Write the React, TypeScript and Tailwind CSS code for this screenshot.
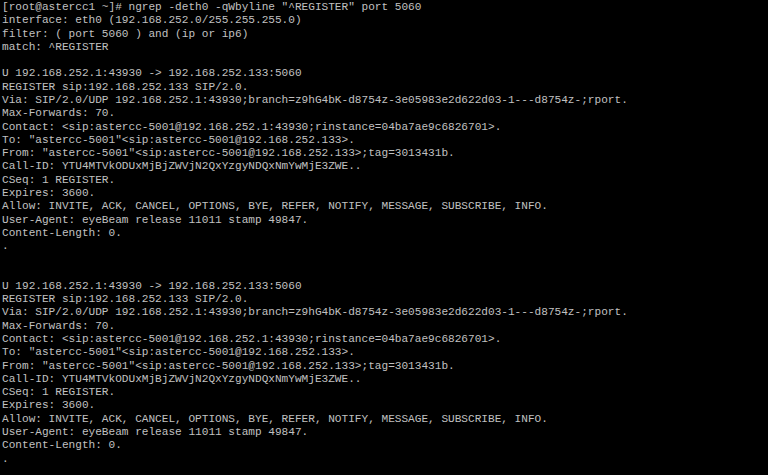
const lineas = [
  '[root@astercc1 ~]# ngrep -deth0 -qWbyline "^REGISTER" port 5060',
  'interface: eth0 (192.168.252.0/255.255.255.0)',
  'filter: ( port 5060 ) and (ip or ip6)',
  'match: ^REGISTER',
  '',
];

const paquete = [
  'U 192.168.252.1:43930 -> 192.168.252.133:5060',
  'REGISTER sip:192.168.252.133 SIP/2.0.',
  'Via: SIP/2.0/UDP 192.168.252.1:43930;branch=z9hG4bK-d8754z-3e05983e2d622d03-1---d8754z-;rport.',
  'Max-Forwards: 70.',
  'Contact: <sip:astercc-5001@192.168.252.1:43930;rinstance=04ba7ae9c6826701>.',
  'To: "astercc-5001"<sip:astercc-5001@192.168.252.133>.',
  'From: "astercc-5001"<sip:astercc-5001@192.168.252.133>;tag=3013431b.',
  'Call-ID: YTU4MTVkODUxMjBjZWVjN2QxYzgyNDQxNmYwMjE3ZWE..',
  'CSeq: 1 REGISTER.',
  'Expires: 3600.',
  'Allow: INVITE, ACK, CANCEL, OPTIONS, BYE, REFER, NOTIFY, MESSAGE, SUBSCRIBE, INFO.',
  'User-Agent: eyeBeam release 11011 stamp 49847.',
  'Content-Length: 0.',
  '.',
  '',
  '',
];

export default function App() {
  const todas = [...lineas, ...paquete, ...paquete];

  return (
    <div className="w-[768px] h-[475px] overflow-hidden bg-black pl-[2px] pt-[1px]">
      <div className="font-['Liberation_Mono','Courier_New',monospace] text-[11.1px] leading-[13.29px] text-[#c0c0c0] whitespace-pre">
        {todas.map((l, i) => (
          <div key={i} className="h-[13.29px]">{l}</div>
        ))}
      </div>
    </div>
  );
}
